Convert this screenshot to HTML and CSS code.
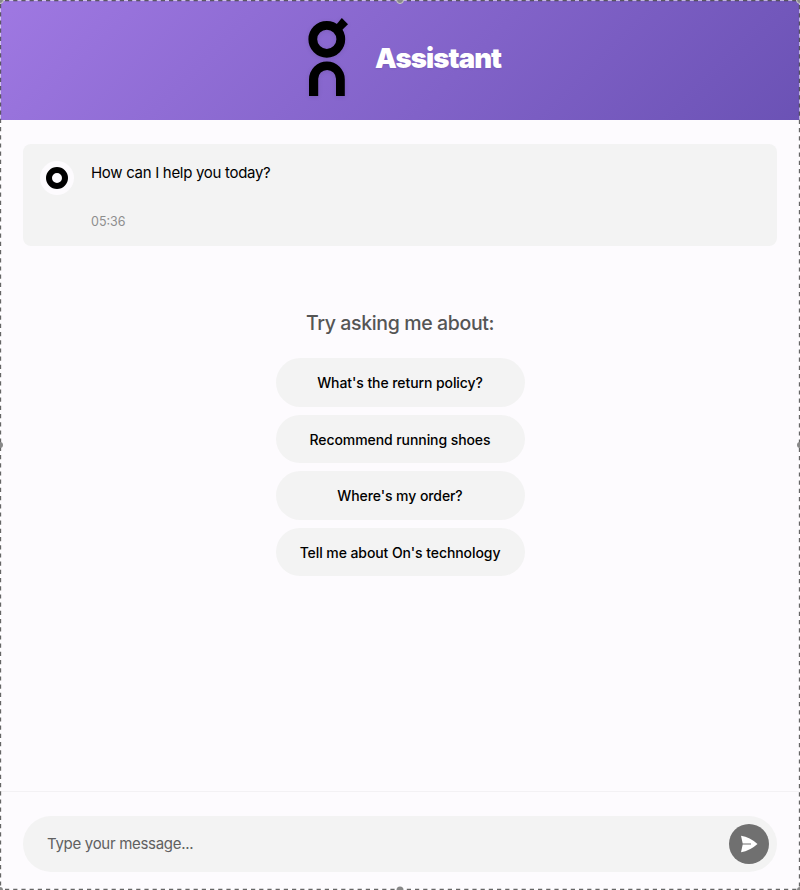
FILE: index.html
```html
<!DOCTYPE html>
<html lang="en">
<head>
<meta charset="utf-8">
<title>Assistant</title>
<link rel="stylesheet" href="styles.css">
</head>
<body>
<div class="app">
  <header class="header">
    <svg class="logo" width="42" height="80" viewBox="0 0 42 80">
      <circle cx="19.8" cy="22.3" r="14" fill="none" stroke="#000" stroke-width="8.8"/>
      <path d="M26.500 11 34.800 1 41 7.200 31 17Z"/>
      <path d="M2 79V62.4a17.9 17.9 0 0 1 35.8 0V79H29V61.8a8.9 8.9 0 0 0-17.8 0V79Z"/>
    </svg>
    <h1 class="title">Assistant</h1>
  </header>
  <main class="chat">
    <article class="message">
      <div class="avatar"><span class="ring"></span></div>
      <div class="body">
        <p class="text">How can I help you today?</p>
        <time class="time">05:36</time>
      </div>
    </article>
    <section class="suggestions">
      <h2 class="prompt">Try asking me about:</h2>
      <button class="chip">What's the return policy?</button>
      <button class="chip">Recommend running shoes</button>
      <button class="chip">Where's my order?</button>
      <button class="chip">Tell me about On's technology</button>
    </section>
  </main>
  <footer class="composer">
    <div class="field">
      <span class="placeholder">Type your message...</span>
      <button class="send" aria-label="Send">
        <svg width="18" height="18" viewBox="0 0 18 18"><path fill="#fff" d="M1 .8Q10 2.3 17.5 9 10 15.800 1 17.200L2.700 9.600H11V8.500H2.700Z"/></svg>
      </button>
    </div>
  </footer>
  <svg class="selection" width="800" height="890" viewBox="0 0 800 890">
    <rect x=".5" y=".5" width="799" height="889" fill="none" stroke="#fff" stroke-opacity=".55"/>
    <path d="M5 .5H800M799.5 5V890M5 889.500H800M.5 4V890" fill="none" stroke="#333" stroke-opacity=".75" stroke-width="1.300" stroke-dasharray="4.200 4"/>
    <g fill="#888" stroke="#ccc"><circle cx="400" cy="0" r="3.500"/><circle cx="0" cy="0" r="3.500"/><circle cx="800" cy="0" r="3.500"/></g>
    <g fill="#888"><circle cx="0" cy="445" r="3"/><circle cx="800" cy="445" r="3"/><circle cx="400" cy="890" r="3.500"/><circle cx="0" cy="890" r="3"/><circle cx="800" cy="890" r="3"/></g>
  </svg>
</div>
</body>
</html>
```
FILE: styles.css
```css
* { box-sizing: border-box; }
body { margin: 0; font-family: Inter, "Liberation Sans", sans-serif; color: #000; }
.app { position: relative; width: 800px; height: 890px; display: flex; flex-direction: column; background: #fdfbfe; overflow: hidden; }
.header { height: 120px; flex: none; display: flex; align-items: center; justify-content: center; gap: 26px; padding-left: 9px; padding-bottom: 6px; background: linear-gradient(135deg, #9f78e2, #6b52b5); }
.logo { filter: drop-shadow(0 1px 2px rgba(0, 0, 0, .1)); }
.title { margin: 2px 0 0; width: 127px; white-space: nowrap; color: #fff; font-size: 27.500px; font-weight: 900; line-height: 36px; letter-spacing: -.9px; text-shadow: 0 1px 2px rgba(0, 0, 0, .08); }
.chat { flex: 1; padding: 24px 23px 0; display: flex; flex-direction: column; }
.message { height: 102px; flex: none; border-radius: 8px; background: #f3f3f3; padding: 17px; display: flex; gap: 17px; }
.avatar { width: 34px; height: 34px; border-radius: 50%; background: #fdfbfe; display: grid; place-items: center; }
.ring { width: 22px; height: 22px; border: 6px solid #000; border-radius: 50%; }
.body { display: flex; flex-direction: column; gap: 27px; }
.text { margin: 0; font-size: 15px; line-height: 24px; letter-spacing: -.3px; }
.time { font-size: 12.500px; line-height: 20px; color: #8e8e8e; }
.suggestions { margin-top: 63px; display: flex; flex-direction: column; align-items: center; gap: 8px; }
.prompt { margin: 0 0 13px; font-size: 19.500px; font-weight: 450; line-height: 28px; color: #555; letter-spacing: -.36px; }
.chip { width: 249px; height: 48.600px; padding: 2px 0 0; border: 0; border-radius: 25px; background: #f3f3f3; font: 500 14px/20px Inter, sans-serif; letter-spacing: -.08px; color: #000; }
.composer { height: 99px; flex: none; padding: 24px 23px 0; border-top: 1px solid #f3f1f4; }
.field { height: 56px; border-radius: 28px; background: #f3f3f3; padding: 0 8px 0 24px; display: flex; align-items: center; justify-content: space-between; }
.placeholder { font-size: 15px; letter-spacing: -.3px; color: #606060; margin-top: -2px; }
.send { width: 40px; height: 40px; padding: 0; border: 0; border-radius: 50%; background: #707070; display: grid; place-items: center; }
.selection { position: absolute; inset: 0; }
```
